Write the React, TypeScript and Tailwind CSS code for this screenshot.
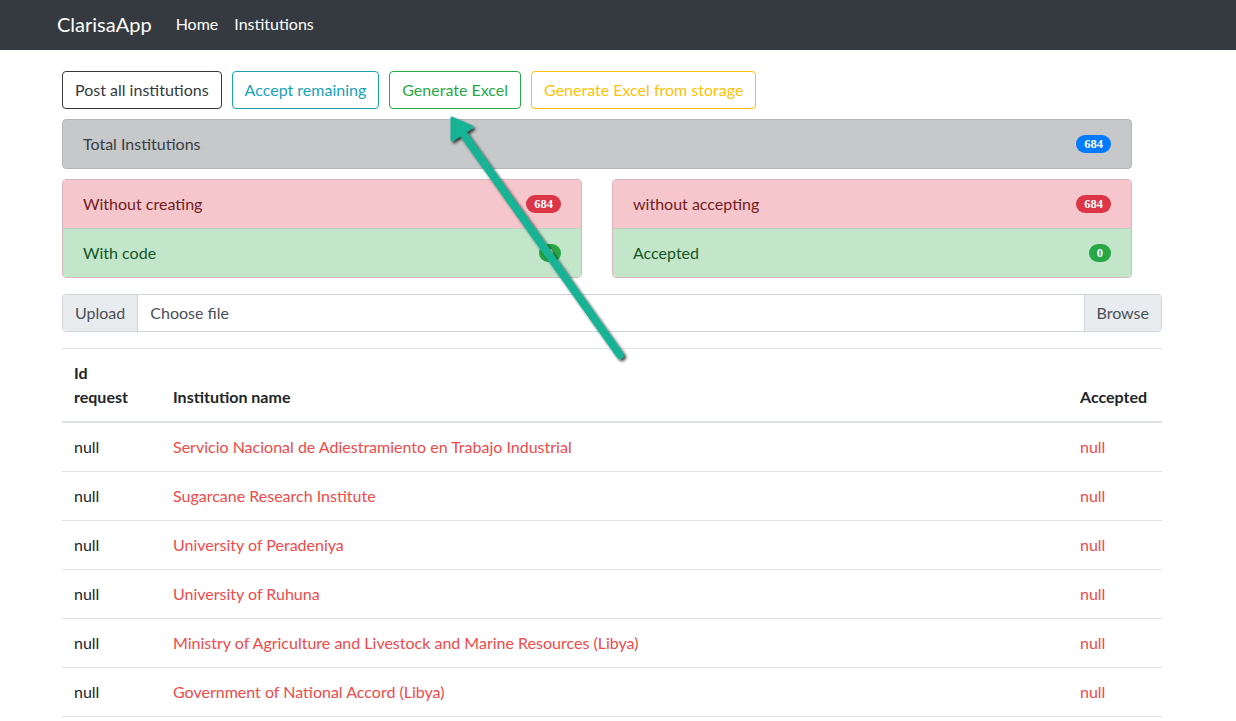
const rows = [
  'Servicio Nacional de Adiestramiento en Trabajo Industrial',
  'Sugarcane Research Institute',
  'University of Peradeniya',
  'University of Ruhuna',
  'Ministry of Agriculture and Livestock and Marine Resources (Libya)',
  'Government of National Accord (Libya)',
];

function Badge({ value, color }: { value: string; color: string }) {
  return (
    <span
      className={`rounded-full px-[8px] text-[12.5px] font-bold leading-[18px] text-white ${color}`}
      style={{ fontFamily: '"Liberation Serif", serif' }}
    >
      {value}
    </span>
  );
}

function Arrow() {
  return (
    <svg className="pointer-events-none absolute left-0 top-0" width="1236" height="721">
      <defs>
        <filter id="sh" x="-20%" y="-20%" width="140%" height="140%">
          <feDropShadow dx="2" dy="2" stdDeviation="1.5" floodColor="#000" floodOpacity="0.75" />
        </filter>
      </defs>
      <g filter="url(#sh)">
        <line x1="620" y1="355" x2="462" y2="132" stroke="#14b395" strokeWidth="8" strokeLinecap="round" />
        <polygon points="452,118 452,140 472,127" fill="#14b395" stroke="#14b395" strokeWidth="3" strokeLinejoin="round" />
      </g>
    </svg>
  );
}

export default function App() {
  return (
    <div className="relative h-[721px] overflow-hidden bg-white text-[16px] text-[#212529]" style={{ fontFamily: 'Lato, "Open Sans", sans-serif' }}>
      <nav className="flex h-[50px] items-center bg-[#343a40] pb-[3px] pl-[57px] text-white">
        <span className="mr-6 text-[20px]">ClarisaApp</span>
        <span className="mr-4">Home</span>
        <span>Institutions</span>
      </nav>

      <div className="ml-[62px] w-[1100px] pt-[21px]">
        <div className="flex gap-[10px]">
          <button className="h-[38px] rounded border border-[#343a40] px-3 text-[#343a40]">Post all institutions</button>
          <button className="h-[38px] rounded border border-[#17a2b8] px-3 text-[#17a2b8]">Accept remaining</button>
          <button className="h-[38px] rounded border border-[#28a745] px-3 text-[#28a745]">Generate Excel</button>
          <button className="h-[38px] rounded border border-[#ffc107] px-3 text-[#ffc107]">Generate Excel from storage</button>
        </div>

        <div className="mt-[10px] flex h-[50px] w-[1070px] items-center justify-between rounded border border-[#b4b6b8] bg-[#c6c8ca] pl-5 pr-5 text-[#383d41]">
          <span>Total Institutions</span>
          <Badge value="684" color="bg-[#007bff]" />
        </div>

        <div className="mt-[10px] grid w-[1070px] grid-cols-2 gap-[30px]">
          {[
            ['Without creating', 'With code'],
            ['without accepting', 'Accepted'],
          ].map(([a, b]) => (
            <div key={a} className="overflow-hidden rounded border border-[#d9b6ba]">
              <div className="flex h-[49px] items-center justify-between border-b border-[#b9d3bf] bg-[#f5c6cb] px-5 text-[#721c24]">
                <span>{a}</span>
                <Badge value="684" color="bg-[#dc3545]" />
              </div>
              <div className="flex h-[48px] items-center justify-between bg-[#c3e6cb] px-5 text-[#155724]">
                <span>{b}</span>
                <Badge value="0" color="bg-[#28a745]" />
              </div>
            </div>
          ))}
        </div>

        <div className="mt-4 flex h-[38px] overflow-hidden rounded border border-[#ced4da] text-[#495057]">
          <div className="flex items-center border-r border-[#ced4da] bg-[#e9ecef] px-3">Upload</div>
          <div className="flex flex-1 items-center px-3">Choose file</div>
          <div className="flex items-center border-l border-[#ced4da] bg-[#e9ecef] px-3">Browse</div>
        </div>

        <table className="mt-4 w-full border-collapse">
          <thead>
            <tr className="border-t border-[#dee2e6]">
              <th className="w-[99px] border-b-2 border-[#dee2e6] p-3 text-left align-bottom font-bold leading-6">
                Id
                <br />
                request
              </th>
              <th className="border-b-2 border-[#dee2e6] p-3 text-left align-bottom font-bold leading-6">Institution name</th>
              <th className="w-[94px] border-b-2 border-[#dee2e6] p-3 text-left align-bottom font-bold leading-6">Accepted</th>
            </tr>
          </thead>
          <tbody>
            {rows.map((name, i) => (
              <tr key={i} className="border-b border-[#dee2e6]">
                <td className="p-3 font-normal leading-6">null</td>
                <td className="p-3 font-normal leading-6 text-[#f04a4a]">{name}</td>
                <td className="p-3 font-normal leading-6 text-[#f04a4a]">null</td>
              </tr>
            ))}
          </tbody>
        </table>
      </div>

      <Arrow />
    </div>
  );
}
